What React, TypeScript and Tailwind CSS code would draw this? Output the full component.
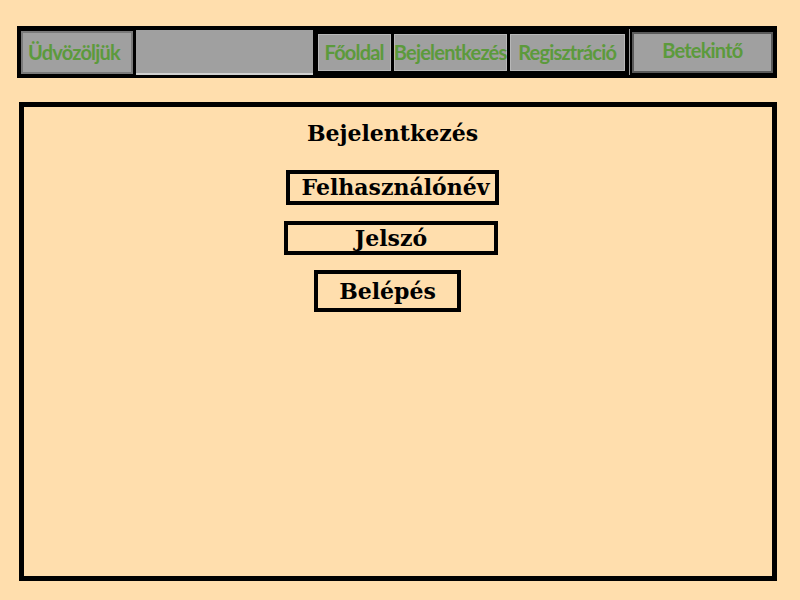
import React from "react";

const navItems = [
  { label: "Főoldal", w: "w-[73px]" },
  { label: "Bejelentkezés", w: "w-[113px]" },
  { label: "Regisztráció", w: "w-[115px]" },
];

export default function App() {
  return (
    <div className="min-h-[600px] w-[800px] bg-[#ffdead] pt-[26px] pl-[17px]">
      {/* Top navigation */}
      <nav
        className="flex h-[52px] w-[760px] items-center gap-[3px] bg-black px-[4px] text-[20px] font-bold text-[#5c9a3c]"
        style={{ fontFamily: "Lato, 'Open Sans', sans-serif" }}
      >
        <div className="flex h-[43px] w-[113px] items-center border-2 border-[#7a7a7a] bg-[#a0a0a0] pl-[5px] tracking-[-0.8px]">
          Üdvözöljük
        </div>
        <div className="h-[45px] w-[179px] border-b-2 border-b-[#d0d0d0] bg-[#a0a0a0]" />
        <div className="flex h-[45px] items-center gap-[3px] border-2 border-black">
          {navItems.map(item => (
            <div
              key={item.label}
              className={`flex h-[37px] ${item.w} items-center justify-center border border-[#b8b8b8] bg-[#a0a0a0] tracking-[-0.8px]`}
            >
              {item.label}
            </div>
          ))}
        </div>
        <div className="-ml-[1px] h-[46px] w-px bg-[#9a9a9a]" />
        <div className="-ml-[1px] flex h-[41px] w-[143px] items-center justify-center border-2 border-[#5a5a5a] bg-[#a0a0a0] pb-[4px] tracking-[-0.8px]">
          Betekintő
        </div>
      </nav>

      {/* Login panel */}
      <main
        className="mt-[24px] ml-[2px] flex h-[479px] w-[758px] flex-col items-center border-[5px] border-black pt-[12px] font-bold text-black"
        style={{ fontFamily: "'DejaVu Serif', Georgia, serif" }}
      >
        <h1 className="mr-[11px] text-[22px] leading-[29px]">Bejelentkezés</h1>
        <div className="mt-[22px] mr-[11px] flex h-[35px] w-[213px] items-center justify-center border-[4px] border-black pl-[6px] text-[22px]">
          Felhasználónév
        </div>
        <div className="mt-[16px] mr-[14px] flex h-[34px] w-[214px] items-center justify-center border-[4px] border-black text-[22px]">
          Jelszó
        </div>
        <div className="mt-[15px] mr-[21px] flex h-[42px] w-[147px] items-center justify-center border-[4px] border-black text-[22px]">
          Belépés
        </div>
      </main>
    </div>
  );
}
